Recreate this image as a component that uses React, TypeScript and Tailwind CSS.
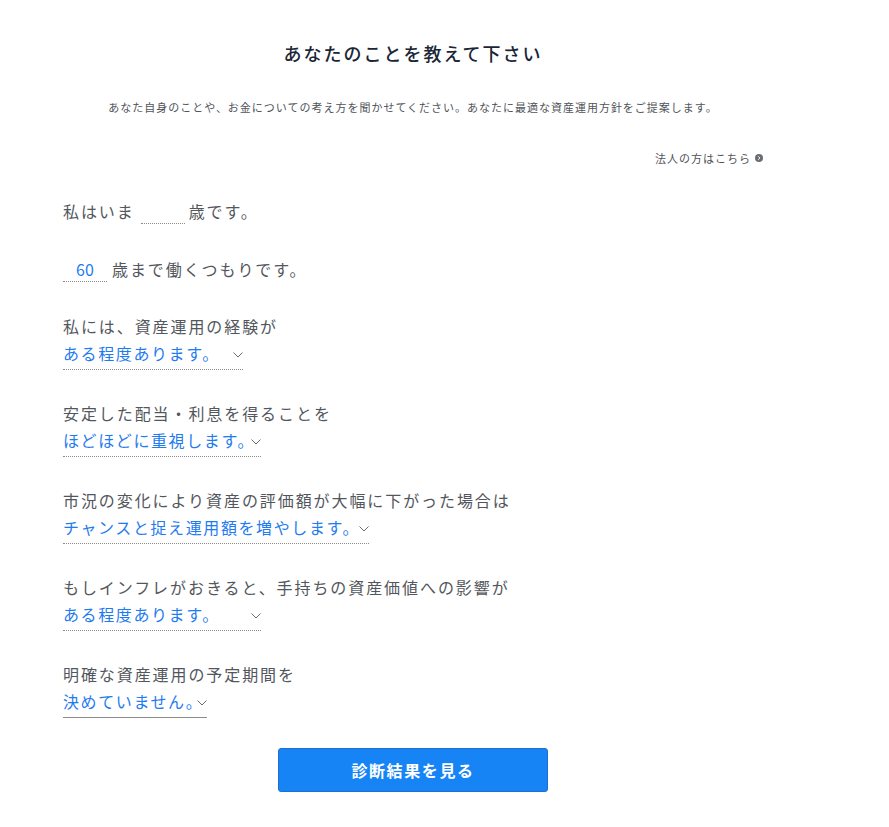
import { useState } from 'react';

const font = { fontFamily: '"Noto Sans CJK JP", "Noto Sans", sans-serif' };

function Chevron() {
  return (
    <svg
      viewBox="0 0 10 6"
      className="pointer-events-none absolute right-0 top-1/2 mt-[1px] h-[6px] w-[10px] -translate-y-1/2"
    >
      <path d="M0.5 0.5 L5 5 L9.5 0.5" fill="none" stroke="#6b6b6b" strokeWidth="1" />
    </svg>
  );
}

interface SelectQuestionProps {
  label: string;
  value: string;
  options: string[];
  width: string;
  solid?: boolean;
  className?: string;
}

function SelectQuestion({ label, value, options, width, solid, className }: SelectQuestionProps) {
  const [v, setV] = useState(value);
  return (
    <div className={className}>
      <p className="h-[24px] text-[16px] leading-[24px] tracking-[0.12em] text-[#53575d]">{label}</p>
      <div
        className={`relative h-[32px] border-b ${
          solid ? 'border-solid border-[#8c8c8c]' : 'border-dotted border-[#8a8a8a]'
        } ${width}`}
      >
        <select
          value={v}
          onChange={(e) => setV(e.target.value)}
          className="h-full w-full cursor-pointer appearance-none bg-transparent pb-[1px] text-[16px] leading-[30px] tracking-[0.1em] text-[#1f7bf0] outline-none"
          style={font}
        >
          {options.map((o) => (
            <option key={o} value={o}>
              {o}
            </option>
          ))}
        </select>
        <Chevron />
      </div>
    </div>
  );
}

export default function App() {
  const [age, setAge] = useState('');
  const [retire, setRetire] = useState('60');

  return (
    <div className="min-h-[827px] w-full bg-white" style={font}>
      <div className="ml-[63px] w-[700px] pt-[40px] pb-[34px]">
        {/* Header */}
        <h1 className="text-center text-[18px] font-medium leading-[27px] tracking-[0.11em] text-[#1a2636]">
          あなたのことを教えて下さい
        </h1>
        <p className="mt-[32px] text-center text-[11px] leading-[16px] tracking-[0.09em] text-[#50545a]">
          あなた自身のことや、お金についての考え方を聞かせてください。あなたに最適な資産運用方針をご提案します。
        </p>
        <div className="mt-[35px] flex items-center justify-end gap-[4px] text-[11px] leading-[16px] tracking-[0.09em] text-[#50545a]">
          <span>法人の方はこちら</span>
          <svg viewBox="0 0 8 8" className="h-[8px] w-[8px]">
            <circle cx="4" cy="4" r="4" fill="#6a6d72" />
            <path d="M3.2 2.3 L4.9 4 L3.2 5.7" fill="none" stroke="#fff" strokeWidth="1" />
          </svg>
        </div>

        {/* Age */}
        <div className="mt-[32px] flex h-[26px] items-center text-[16px] tracking-[0.12em] text-[#53575d]">
          <span>私はいま</span>
          <input
            value={age}
            onChange={(e) => setAge(e.target.value)}
            className="ml-[6px] mr-[4px] h-[26px] w-[44px] border-b border-dotted border-[#8a8a8a] bg-transparent text-center text-[16px] text-[#1f7bf0] outline-none"
          />
          <span>歳です。</span>
        </div>

        {/* Retire age */}
        <div className="mt-[32px] flex h-[26px] items-center text-[16px] tracking-[0.12em] text-[#53575d]">
          <input
            value={retire}
            onChange={(e) => setRetire(e.target.value)}
            className="mr-[5px] h-[26px] w-[44px] border-b border-dotted border-[#8a8a8a] bg-transparent text-center text-[16px] tracking-normal text-[#1f7bf0] outline-none"
          />
          <span>歳まで働くつもりです。</span>
        </div>

        <SelectQuestion
          className="mt-[32px]"
          label="私には、資産運用の経験が"
          value="ある程度あります。"
          options={['ほとんどありません。', 'ある程度あります。', '十分にあります。']}
          width="w-[180px]"
        />
        <SelectQuestion
          className="mt-[31px]"
          label="安定した配当・利息を得ることを"
          value="ほどほどに重視します。"
          options={['あまり重視しません。', 'ほどほどに重視します。', 'とても重視します。']}
          width="w-[198px]"
        />
        <SelectQuestion
          className="mt-[31px]"
          label="市況の変化により資産の評価額が大幅に下がった場合は"
          value="チャンスと捉え運用額を増やします。"
          options={['すぐに売却します。', 'しばらく様子を見ます。', 'チャンスと捉え運用額を増やします。']}
          width="w-[306px]"
        />
        <SelectQuestion
          className="mt-[31px]"
          label="もしインフレがおきると、手持ちの資産価値への影響が"
          value="ある程度あります。"
          options={['ほとんどありません。', 'ある程度あります。', '大きくあります。']}
          width="w-[198px]"
        />
        <SelectQuestion
          className="mt-[31px]"
          label="明確な資産運用の予定期間を"
          value="決めていません。"
          options={['決めていません。', '10年以内です。', '10年以上です。']}
          width="w-[144px]"
          solid
        />

        {/* Submit */}
        <div className="mt-[30px] flex justify-center">
          <button
            type="button"
            className="h-[44px] w-[270px] rounded-[3px] border border-[#1f6fcc] bg-[#1784f6] text-[16px] font-bold tracking-[0.1em] text-white hover:bg-[#0f75e0]"
          >
            診断結果を見る
          </button>
        </div>
      </div>
    </div>
  );
}
